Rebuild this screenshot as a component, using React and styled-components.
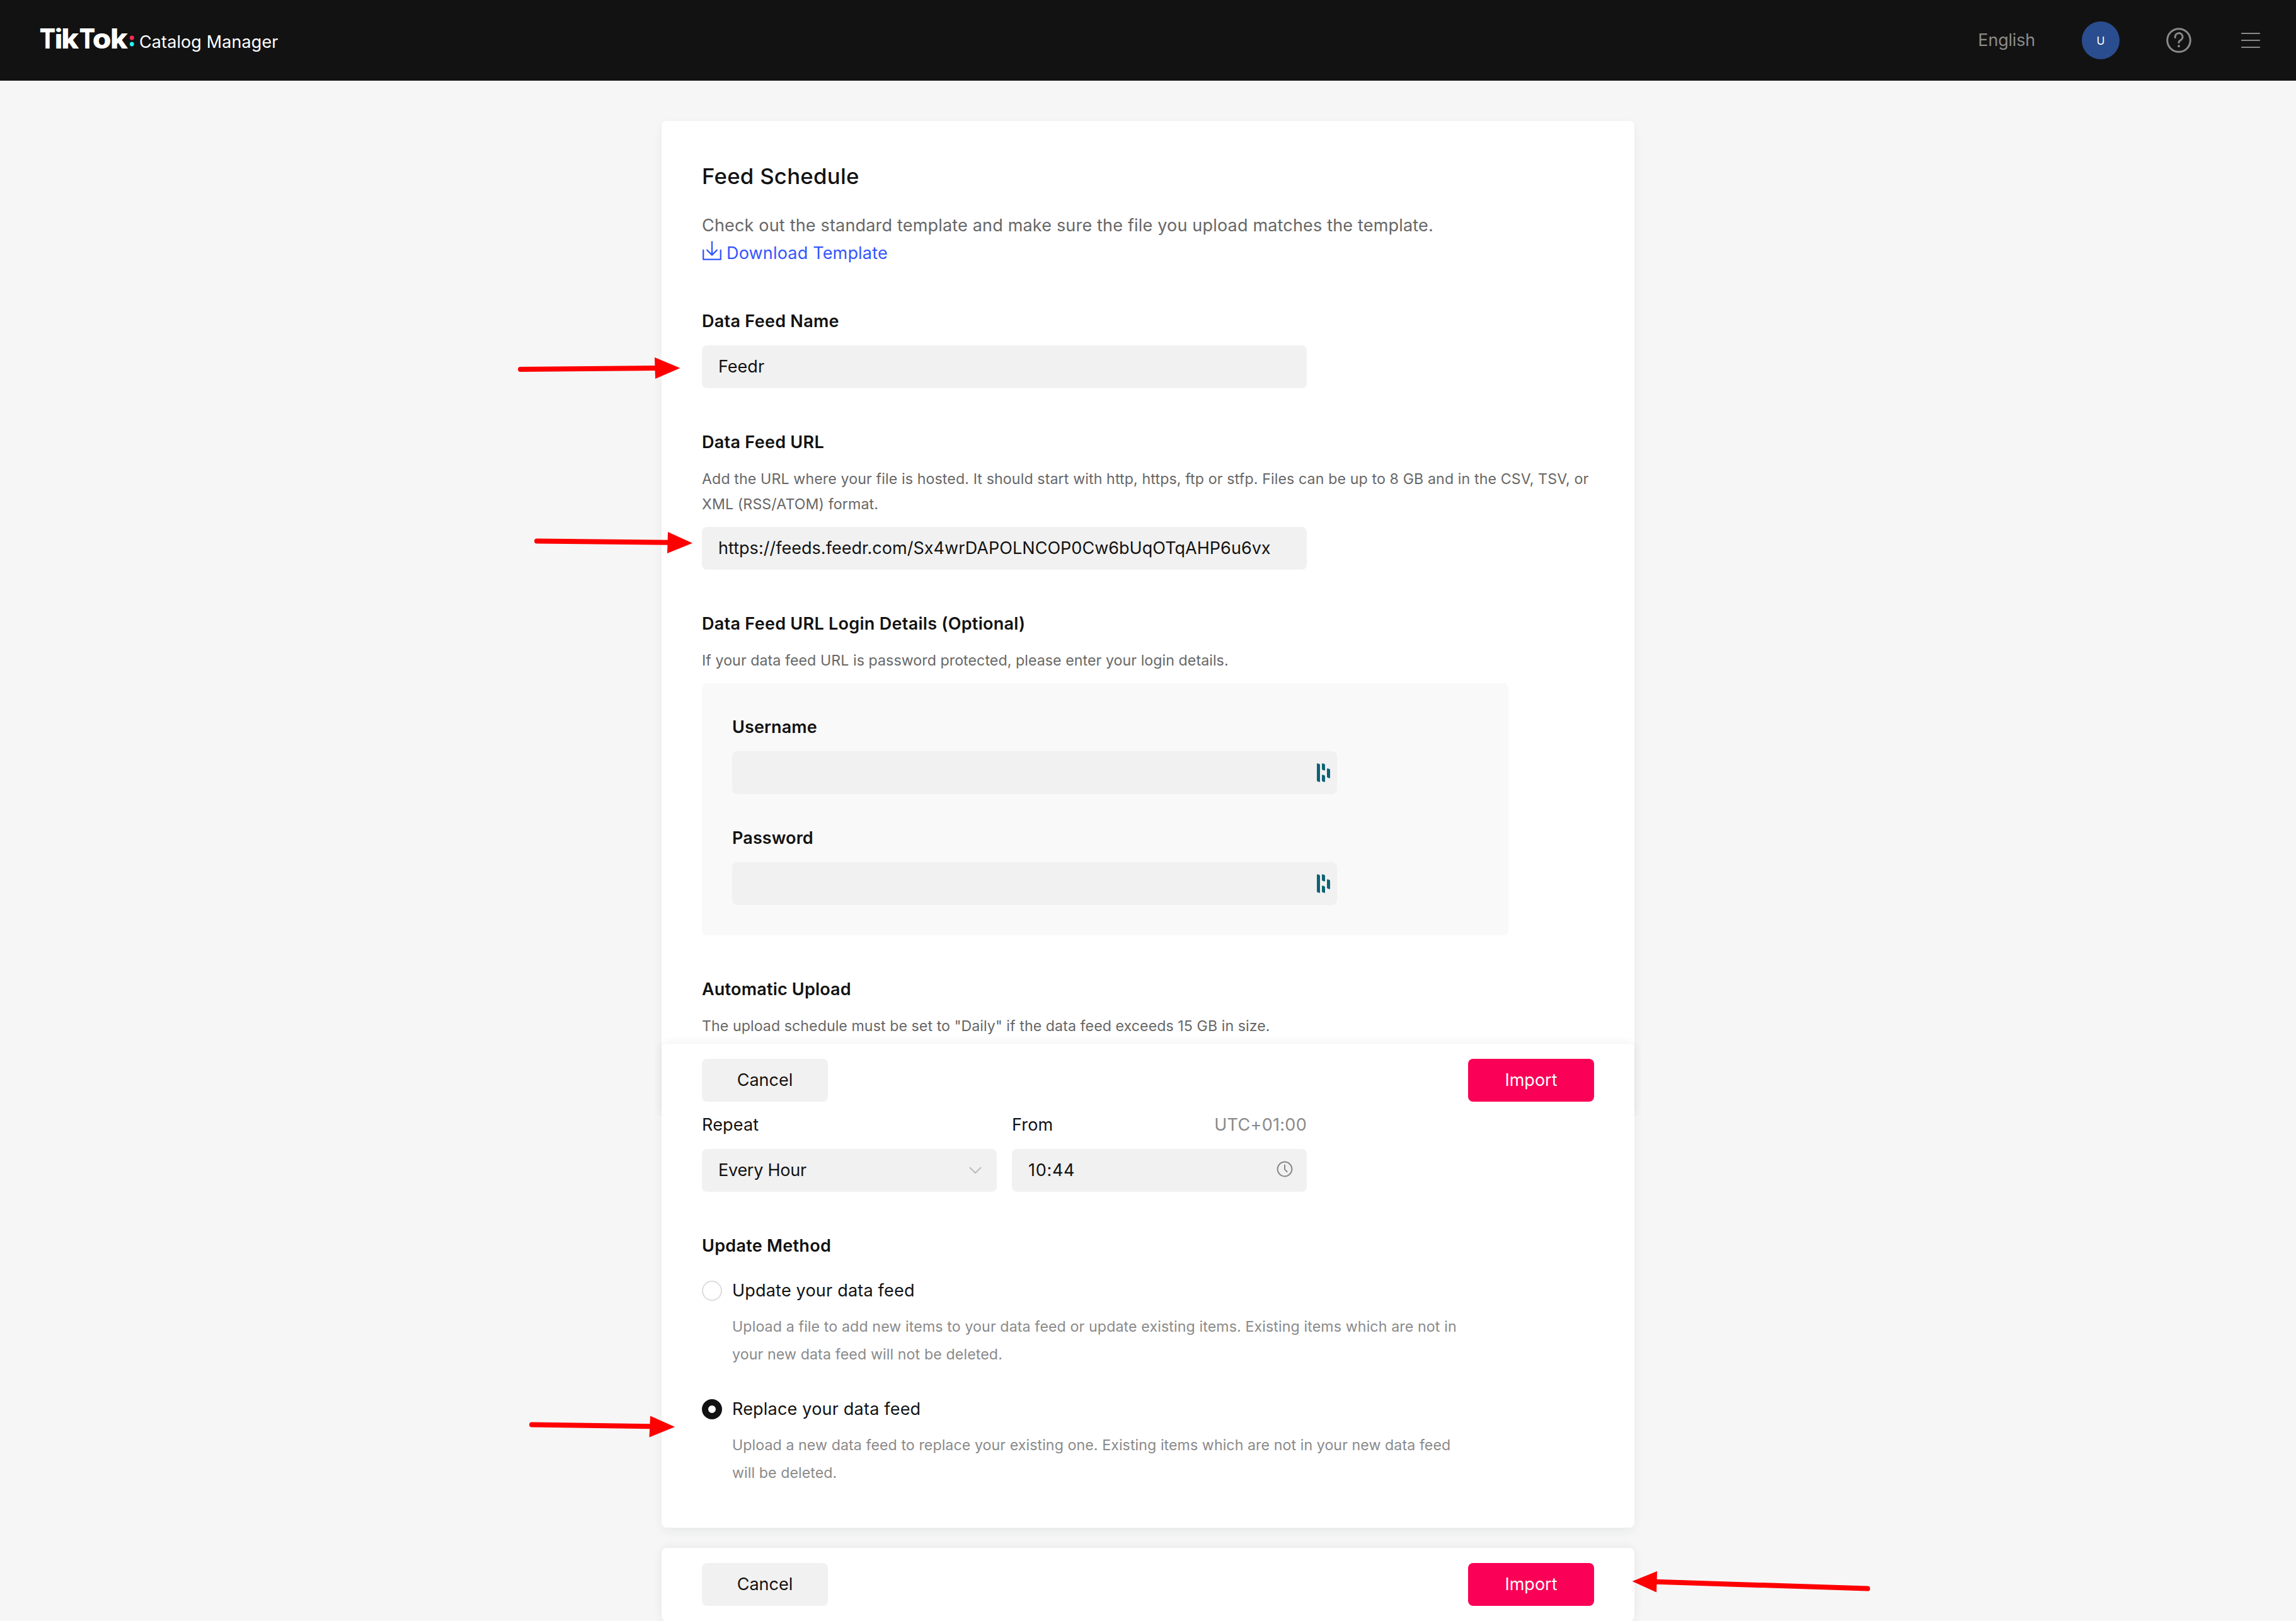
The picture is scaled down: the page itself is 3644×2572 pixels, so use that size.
import React from 'react';
import styled, { createGlobalStyle } from 'styled-components';

const GlobalStyle = createGlobalStyle`
  * { box-sizing: border-box; }
  body {
    margin: 0;
    background: #f6f6f6;
    color: #121212;
    font-family: Inter, "Liberation Sans", sans-serif;
    font-size: 27px;
    line-height: 44px;
    letter-spacing: 0.18px;
  }
`;

const Page = styled.div`
  position: relative;
  width: 3644px;
  height: 2572px;
  overflow: hidden;
`;

/* ---------- header ---------- */

const Header = styled.header`
  display: flex;
  align-items: center;
  justify-content: space-between;
  height: 128px;
  padding: 0 52px 0 60px;
  background: #121212;
`;

const Brand = styled.div`
  display: flex;
  align-items: center;
  color: #fff;
`;

const Logo = styled.svg`
  display: block;
  width: 161px;
  height: 128px;
  font-family: Inter, "Open Sans", sans-serif;
  font-weight: 800;
  font-size: 43.5px;
  letter-spacing: 0;
`;

const Product = styled.span`
  padding-top: 5px;
  letter-spacing: 0.1px;
`;

const HeaderTools = styled.nav`
  display: flex;
  align-items: center;
  gap: 74px;
`;

const Language = styled.span`
  color: #8a8a8a;
  letter-spacing: -0.2px;
`;

const Avatar = styled.span`
  display: flex;
  align-items: center;
  justify-content: center;
  width: 60px;
  height: 60px;
  border-radius: 50%;
  background: #2a4d8f;
  color: #fff;
  font-size: 17.5px;
  padding-top: 2px;
`;

const ToolIcon = styled.svg`
  display: block;
  width: 40px;
  height: 40px;
  fill: none;
  stroke: #8a8a8a;
  stroke-linecap: round;
`;

/* ---------- cards ---------- */

const Main = styled.main`
  display: flex;
  flex-direction: column;
  gap: 32px;
  width: 1544px;
  margin: 64px 0 0 1050px;
`;

const Card = styled.section`
  height: 2232px;
  padding: 64px;
  border-radius: 8px;
  background: #fff;
  box-shadow: 0 6px 16px rgba(20, 50, 70, 0.06);
`;

const Title = styled.h1`
  margin: 0 0 34px;
  font-size: 34.7px;
  line-height: 46px;
  font-weight: 500;
  letter-spacing: 0.3px;
`;

const Intro = styled.p`
  margin: 0;
  color: #676767;
`;

const DownloadLink = styled.a`
  display: flex;
  align-items: center;
  gap: 7px;
  height: 44px;
  color: #3355ff;
`;

const DownloadIcon = styled.svg`
  width: 32px;
  height: 32px;
  margin-top: -8px;
  fill: none;
  stroke: currentColor;
  stroke-width: 2.3;
  stroke-linejoin: round;
  stroke-linecap: round;
`;

const Group = styled.div`
  display: flex;
  flex-direction: column;
  align-items: flex-start;
  gap: 16px;
  margin-top: ${(p) => p.$space ?? 64}px;
`;

const Label = styled.h2`
  margin: 0;
  font-size: 27px;
  line-height: 44px;
  font-weight: 600;
  letter-spacing: ${(p) => p.$track ?? 0.28}px;
`;

const Help = styled.p`
  margin: 0;
  color: #676767;
  font-size: 23.15px;
  line-height: 40px;
  letter-spacing: ${(p) => p.$track ?? 0.08}px;
  white-space: nowrap;
`;

const Field = styled.div`
  display: flex;
  align-items: center;
  justify-content: space-between;
  width: ${(p) => p.$width ?? 960}px;
  height: 68px;
  padding: 0 ${(p) => p.$end ?? 26}px 1px 26px;
  border-radius: 8px;
  background: #f1f1f1;
  letter-spacing: ${(p) => p.$track ?? 0}px;
`;

const LoginBox = styled.div`
  width: 1280px;
  height: 400px;
  padding: 48px;
  border-radius: 8px;
  background: #f9f9f9;
`;

const VaultIcon = styled.svg`
  width: 21px;
  height: 30px;
  margin-left: auto;
  fill: #0f6274;
`;

const ActionBar = styled.div`
  display: flex;
  align-items: flex-start;
  justify-content: space-between;
  height: ${(p) => (p.$pinned ? 115 : 116)}px;
  margin: ${(p) => (p.$pinned ? '8px -64px 0' : '0')};
  padding: 24px 64px;
  border-radius: 8px;
  background: #fff;
  box-shadow: 0 0 16px rgba(0, 0, 0, 0.07);
  clip-path: ${(p) => (p.$pinned ? 'inset(-24px -24px 0 -24px)' : 'none')};
`;

const Button = styled.button`
  width: 200px;
  height: 68px;
  padding: 0 0 1px;
  border: 0;
  border-radius: 8px;
  background: ${(p) => (p.$primary ? '#fa0056' : '#f1f1f1')};
  color: ${(p) => (p.$primary ? '#fff' : '#121212')};
  font: inherit;
  letter-spacing: 0;
`;

const Schedule = styled.div`
  display: flex;
  gap: 24px;
`;

const ScheduleColumn = styled.div`
  display: flex;
  flex-direction: column;
  gap: 24px;
  width: 468px;
`;

const ScheduleLabel = styled.div`
  display: flex;
  justify-content: space-between;
  line-height: 28px;
`;

const Zone = styled.span`
  color: #8a8a8a;
  letter-spacing: 0.3px;
`;

const Chevron = styled.svg`
  width: 20px;
  height: 12px;
  fill: none;
  stroke: #bcbcbc;
  stroke-width: 2;
`;

const Clock = styled.svg`
  width: 26px;
  height: 26px;
  margin-top: -4px;
  fill: none;
  stroke: #8a8a8a;
  stroke-width: 2;
`;

const Option = styled.div`
  display: grid;
  grid-template-columns: 32px auto;
  column-gap: 16px;
  row-gap: 13px;
  align-items: center;
  margin-top: ${(p) => p.$space}px;
`;

const Radio = styled.span`
  width: 32px;
  height: 32px;
  border-radius: 50%;
  background: #fff;
  border: ${(p) => (p.$checked ? '10px solid #121212' : '2px solid #dcdcdc')};
`;

const OptionName = styled.span`
  letter-spacing: 0.2px;
`;

const OptionText = styled.p`
  grid-column: 2;
  margin: 0;
  color: #8a8a8a;
  font-size: 23.15px;
  letter-spacing: ${(p) => p.$track}px;
`;

const Annotations = styled.svg`
  position: absolute;
  inset: 0;
  width: 3644px;
  height: 2572px;
  pointer-events: none;
  fill: #ff0000;
  stroke: none;
`;

const Shaft = styled.line`
  stroke: #ff0000;
  stroke-width: 8;
  stroke-linecap: round;
`;

const ARROWS = [
  { from: [826, 586], to: [1042, 584], head: '1039,567 1079.5,584 1040,601' },
  { from: [852, 858.5], to: [1062, 860.7], head: '1060,844 1099,861.7 1059,878' },
  { from: [844, 2260.5], to: [1034, 2263.3], head: '1032,2246.5 1071,2264 1030.5,2280.5' },
  { from: [2964, 2520.5], to: [2628, 2509.8], head: '2630,2493 2590.5,2509 2629,2526.5' },
];

const LOGO_LETTERS = [
  { char: 'T', x: 62.8, width: 25.4 },
  { char: 'i', x: 86.8, width: 12.6, size: 41.8 },
  { char: 'k', x: 97.2, width: 28 },
  { char: 'T', x: 125.8, width: 25.4 },
  { char: 'o', x: 146.7, width: 29.9 },
  { char: 'k', x: 174.9, width: 28 },
];

const Actions = ({ pinned }) => (
  <ActionBar $pinned={pinned}>
    <Button>Cancel</Button>
    <Button $primary>Import</Button>
  </ActionBar>
);

const Credential = ({ name, space }) => (
  <Group $space={space}>
    <Label $track={0.1}>{name}</Label>
    <Field $end={11}>
      <VaultIcon viewBox="0 0 21 30">
        <path d="M0 0.3L3.4 0.8L5 2.2V29.8L1.6 29.2L0 27.8Z" />
        <path d="M8 0.3L11.4 0.8L13 2.2V11.6L9.6 11L8 9.6Z" />
        <path d="M8 18.3L11.4 18.8L13 20.2V29.8L9.6 29.2L8 27.8Z" />
        <path d="M16 8.3L19.4 8.8L21 10.2V23.8L17.6 23.2L16 21.8Z" />
      </VaultIcon>
    </Field>
  </Group>
);

export default function App() {
  return (
    <Page>
      <GlobalStyle />
      <Header>
        <Brand>
          <Logo viewBox="60 0 161 128" fill="#fff">
            <text y="76.7">
              {LOGO_LETTERS.map(({ char, x, width, size }) => (
                <tspan key={x} x={x} textLength={width} lengthAdjust="spacingAndGlyphs" fontSize={size}>
                  {char}
                </tspan>
              ))}
            </text>
            <circle cx="209.3" cy="60" r="3.4" fill="#fe2c55" />
            <circle cx="209.3" cy="70" r="3.4" fill="#25f4ee" />
          </Logo>
          <Product>Catalog Manager</Product>
        </Brand>
        <HeaderTools>
          <Language>English</Language>
          <Avatar>U</Avatar>
          <ToolIcon viewBox="0 0 40 40" strokeWidth="3">
            <circle cx="20" cy="20" r="18.3" />
            <path d="M14.2 15.6V14.5A5.9 5.9 0 1 1 23 19.6C21 20.8 20 21.6 20 23.6" />
            <circle cx="20" cy="29.2" r="1.9" fill="#8a8a8a" stroke="none" />
          </ToolIcon>
          <ToolIcon viewBox="0 0 40 40" strokeWidth="2.2">
            <path d="M6 9H34M6 20H34M6 31H34" />
          </ToolIcon>
        </HeaderTools>
      </Header>

      <Main>
        <Card>
          <Title>Feed Schedule</Title>
          <Intro>Check out the standard template and make sure the file you upload matches the template.</Intro>
          <DownloadLink>
            <DownloadIcon viewBox="0 0 32 32">
              <path d="M2.2 15V29.6H29.8V15M16 1.6V22.3M8.2 14.8L16 22.6L23.8 14.8" />
            </DownloadIcon>
            Download Template
          </DownloadLink>

          <Group>
            <Label>Data Feed Name</Label>
            <Field>Feedr</Field>
          </Group>

          <Group>
            <Label>Data Feed URL</Label>
            <Help $track={0.13}>
              Add the URL where your file is hosted. It should start with http, https, ftp or stfp. Files can be up to 8 GB and in the CSV, TSV, or
              <br />
              XML (RSS/ATOM) format.
            </Help>
            <Field $track={0.03}>https://feeds.feedr.com/Sx4wrDAPOLNCOP0Cw6bUqOTqAHP6u6vx</Field>
          </Group>

          <Group>
            <Label>Data Feed URL Login Details (Optional)</Label>
            <Help>If your data feed URL is password protected, please enter your login details.</Help>
            <LoginBox>
              <Credential name="Username" space={0} />
              <Credential name="Password" space={48} />
            </LoginBox>
          </Group>

          <Group>
            <Label $track={0.2}>Automatic Upload</Label>
            <Help>The upload schedule must be set to "Daily" if the data feed exceeds 15 GB in size.</Help>
          </Group>

          <Actions pinned />

          <Schedule>
            <ScheduleColumn>
              <ScheduleLabel>Repeat</ScheduleLabel>
              <Field $width={468} $end={24} $track={-0.25}>
                Every Hour
                <Chevron viewBox="0 0 20 12">
                  <path d="M1 1.2L10 10L19 1.2" />
                </Chevron>
              </Field>
            </ScheduleColumn>
            <ScheduleColumn>
              <ScheduleLabel>
                From
                <Zone>UTC+01:00</Zone>
              </ScheduleLabel>
              <Field $width={468} $end={22} $track={0.7}>
                10:44
                <Clock viewBox="0 0 26 26">
                  <circle cx="13" cy="13" r="11.4" />
                  <path d="M13 5.8V13.4L17.2 17.8" />
                </Clock>
              </Field>
            </ScheduleColumn>
          </Schedule>

          <Group>
            <Label>Update Method</Label>
          </Group>
          <Option $space={27}>
            <Radio />
            <OptionName>Update your data feed</OptionName>
            <OptionText $track={0.13}>
              Upload a file to add new items to your data feed or update existing items. Existing items which are not in
              <br />
              your new data feed will not be deleted.
            </OptionText>
          </Option>
          <Option $space={43}>
            <Radio $checked />
            <OptionName>Replace your data feed</OptionName>
            <OptionText $track={0.09}>
              Upload a new data feed to replace your existing one. Existing items which are not in your new data feed
              <br />
              will be deleted.
            </OptionText>
          </Option>
        </Card>

        <Actions />
      </Main>

      <Annotations viewBox="0 0 3644 2572">
        {ARROWS.map(({ from, to, head }) => (
          <g key={head}>
            <Shaft x1={from[0]} y1={from[1]} x2={to[0]} y2={to[1]} />
            <polygon points={head} />
          </g>
        ))}
      </Annotations>
    </Page>
  );
}
